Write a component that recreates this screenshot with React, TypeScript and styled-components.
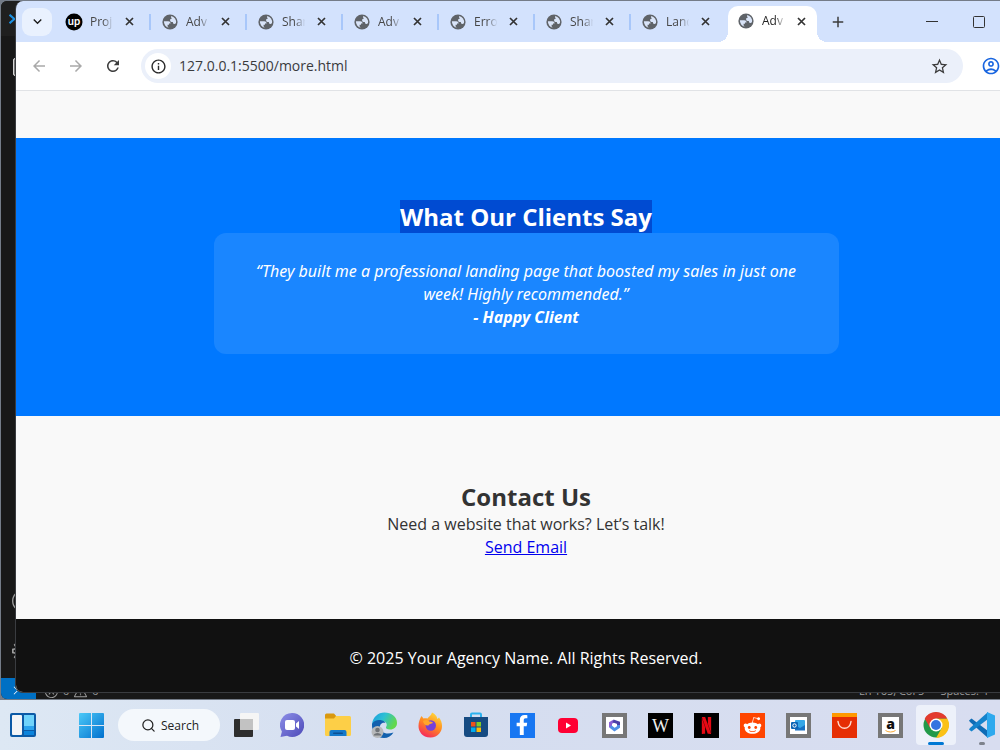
import React from "react";
import styled, { createGlobalStyle, css } from "styled-components";
import {
  MdArrowBack, MdArrowForward, MdRefresh, MdInfoOutline, MdStarBorder,
  MdOutlineAccountCircle, MdAdd, MdKeyboardArrowDown,
} from "react-icons/md";
import { FaRedditAlien, FaFacebookF } from "react-icons/fa";
import { SiNetflix } from "react-icons/si";
import { VscRemote, VscError, VscWarning, VscAccount, VscSettingsGear, VscFiles } from "react-icons/vsc";
import { Search } from "lucide-react";

const Global = createGlobalStyle`
  * { box-sizing: border-box; }
  body { margin: 0; overflow: hidden; font-family: "Open Sans", "Noto Sans", sans-serif; }
  h2, p, blockquote { margin: 0; }
  button { border: 0; padding: 0; background: none; font: inherit; color: inherit; }
  svg { display: block; flex: none; }
`;

const Desktop = styled.div`
  display: flex;
  flex-direction: column;
  min-height: 100vh;
  overflow: hidden;
  background: #747c88;
`;

const Workspace = styled.div`
  display: grid;
  flex: 1;
  grid-template-columns: 1fr;
  padding-top: 1px;
`;

/* editor window behind the browser */
const Editor = styled.div`
  grid-area: 1 / 1;
  display: grid;
  grid-template-rows: 35px 1fr 21px;
  margin: 0 -36px 1px 1px;
  border-radius: 6px;
  overflow: hidden;
  background: #181818;
  color: #9d9d9d;
`;

const EditorTitle = styled.div`
  display: flex;
  align-items: center;
  padding-left: 8px;
  background: #1f1f1f;
`;

const ActivityBar = styled.div`
  display: flex;
  flex-direction: column;
  gap: 28px;
  padding: 16px 11px;
`;

const ActivitySpacer = styled.div`
  flex: 1;
`;

const StatusBar = styled.div`
  display: flex;
  align-items: flex-end;
  gap: 4px;
  padding-right: 36px;
  font-size: 11px;
  line-height: 16px;
`;

const RemoteButton = styled.button`
  display: flex;
  align-items: center;
  padding-left: 10px;
  width: 35px;
  height: 21px;
  margin-right: 4px;
  background: #0070c4;
  color: #fff;
`;

const StatusRight = styled.div`
  display: flex;
  gap: 16px;
  margin-left: auto;
  padding-right: 12px;
  white-space: nowrap;
`;

/* browser window */
const Browser = styled.div`
  grid-area: 1 / 1;
  display: flex;
  flex-direction: column;
  margin: 0 -36px 7px 15px;
  border: 1px solid #3a3c40;
  border-width: 0 0 1px 1px;
  border-radius: 8px;
  overflow: hidden;
  background: #111;
`;

const TabStrip = styled.div`
  display: flex;
  align-items: center;
  height: 41px;
  padding-left: 6px;
  background: #d3e2fd;
  color: #474747;
`;

const TabSearch = styled.button`
  display: grid;
  place-items: center;
  width: 30px;
  height: 28px;
  border-radius: 9px;
  background: #e9f1fe;
  color: #1f1f1f;
`;

const TabList = styled.div`
  display: flex;
  align-self: stretch;
  align-items: center;
  padding-left: 4px;
`;

const Tab = styled.div<{ $active?: boolean; $line?: boolean }>`
  position: relative;
  display: flex;
  align-items: center;
  width: 96px;
  height: 30px;
  padding-left: 10px;
  ${(p) => p.$line && css`
    &::after {
      content: "";
      position: absolute;
      right: 1px;
      width: 2px;
      height: 16px;
      background: #a8c7fa;
    }
  `}
  ${(p) => p.$active && css`
    align-self: flex-end;
    width: 89px;
    height: 36px;
    padding-bottom: 6px;
    border-radius: 10px 10px 0 0;
    background: #fff;
    color: #1f1f1f;
    &::before, &::after {
      content: "";
      position: absolute;
      bottom: 0;
      width: 10px;
      height: 10px;
    }
    &::before { right: 100%; background: radial-gradient(circle at 0 0, transparent 10px, #fff 10px); }
    &::after { left: 100%; background: radial-gradient(circle at 100% 0, transparent 10px, #fff 10px); }
  `}
`;

const TabTitle = styled.span`
  flex: none;
  width: 26px;
  margin: 0 6px 0 8px;
  overflow: hidden;
  white-space: nowrap;
  font-size: 12px;
  line-height: 18px;
  mask-image: linear-gradient(90deg, #000 50%, transparent 90%);
`;

const IconButton = styled.button<{ $faint?: boolean; $size?: number }>`
  display: grid;
  flex: none;
  place-items: center;
  width: ${(p) => p.$size ?? 28}px;
  height: ${(p) => p.$size ?? 28}px;
  color: ${(p) => (p.$faint ? "#a9a9a9" : "#3c3c3c")};
`;

const WindowControls = styled.div`
  display: flex;
  gap: 19px;
  margin-left: auto;
  padding-right: 43px;
`;

const Toolbar = styled.div`
  display: flex;
  align-items: center;
  height: 49px;
  gap: 9px;
  padding: 0 31px 0 9px;
  border-bottom: 1px solid #e1e3e6;
  background: #fff;
`;

const AddressBar = styled.div`
  display: flex;
  flex: 1;
  align-items: center;
  height: 34px;
  margin: 0 5px;
  padding: 0 10px 0 4px;
  border-radius: 17px;
  background: #ebf0fa;
`;

const SiteInfo = styled.button`
  display: grid;
  place-items: center;
  width: 26px;
  height: 26px;
  border-radius: 50%;
  background: #fff;
  color: #2a2a2a;
`;

const AddressInput = styled.input`
  flex: 1;
  min-width: 0;
  border: 0;
  padding: 0 8px;
  outline: 0;
  background: none;
  color: #3a3b3e;
  font: 14px/20px "Open Sans", sans-serif;
`;

const Profile = styled(IconButton)`
  color: #1a66e0;
`;

const Page = styled.main`
  display: flex;
  flex: 1;
  flex-direction: column;
  padding-top: 47px;
  background: #f9f9f9;
  color: #333;
  text-align: center;
  font-size: 16px;
  line-height: 23px;
`;

const Section = styled.section<{ $blue?: boolean }>`
  padding: 64px 24px 60px;
  ${(p) => p.$blue && css`
    padding: 62px 24px;
    background: #0078ff;
    color: #fff;
  `}
`;

const Heading = styled.h2`
  font-size: 24px;
  line-height: 33px;
  font-weight: 700;
`;

const Selected = styled.span`
  display: inline-block;
  background: #004bd2;
`;

const Testimonial = styled.blockquote`
  max-width: 625px;
  margin: 0 auto;
  padding: 27px 31px 25px;
  border-radius: 12px;
  background: #1a86ff;
  font-family: "Noto Sans", "Open Sans", sans-serif;
  font-style: italic;
`;

const MailLink = styled.a`
  color: #0000ee;
  text-decoration: underline;
`;

const Footer = styled.footer`
  flex: 1;
  padding: 28px 24px 22px;
  background: #111;
  color: #fff;
`;

/* taskbar */
const Taskbar = styled.nav`
  display: flex;
  align-items: center;
  height: 50px;
  background: linear-gradient(90deg, #dde8f4, #d5def0 40%, #d8ddf0);
`;

const TaskButton = styled.button<{ $open?: "active" | "idle" }>`
  position: relative;
  display: grid;
  flex: none;
  place-items: center;
  width: 46px;
  height: 50px;
  ${(p) => p.$open === "active" && css`
    &::before {
      content: "";
      position: absolute;
      inset: 5px 3px;
      border-radius: 4px;
      background: #edf1fa;
    }
  `}
  svg { position: relative; }
  ${(p) => p.$open && css`
    &::after {
      content: "";
      position: absolute;
      bottom: 5px;
      width: ${p.$open === "active" ? 16 : 6}px;
      height: 3px;
      border-radius: 2px;
      background: ${p.$open === "active" ? "#0078d4" : "#7d828c"};
    }
  `}
`;

const StartGroup = styled.div`
  display: flex;
  flex: none;
  gap: 22px;
  padding-right: 4px;
`;

const TaskSearch = styled.button`
  display: flex;
  flex: none;
  align-items: center;
  gap: 5px;
  width: 102px;
  height: 32px;
  margin-right: 3px;
  padding-left: 23px;
  border-radius: 16px;
  background: #f4f8fc;
  color: #222;
  font-size: 12px;
`;

const Tile = styled.span<{ $bg: string; $fg?: string; $framed?: boolean }>`
  display: grid;
  place-items: center;
  width: 25px;
  height: 25px;
  background: ${(p) => p.$bg};
  color: ${(p) => p.$fg ?? "#fff"};
  ${(p) => p.$framed && css`border: 4px solid #777;`}
`;

const CloseIcon = () => (
  <svg width="9" height="9" viewBox="0 0 9 9" aria-hidden="true">
    <path d="M1 1l7 7M8 1l-7 7" stroke="#333" strokeWidth="1.700" />
  </svg>
);

const Globe = () => (
  <svg width="16" height="16" viewBox="0 0 16 16" aria-hidden="true">
    <circle cx="8" cy="8" r="7.600" fill="#5f6368" />
    <path d="M1.900 7.200h4.300c1.800 0 2.400 1 2.400 2.300H7v1.200H5.600v1.500c0 .6.500 1 1.300 1.500A6.200 6.200 0 0 1 1.900 7.200z" fill="#d9e4f8" />
    <path d="M9.300 2.100A6.100 6.100 0 0 1 14 9c-.6.900-1.400 1.200-2.100.9-.8-.3-1-1-1-1.900-1.600.1-2.700-.4-2.800-1.600-.1-1.200.8-1.700 1.900-1.800-.9-.5-1.200-1.500-.7-2.500z" fill="#d9e4f8" />
  </svg>
);

const UpLogo = () => (
  <svg width="16" height="18" viewBox="1 0 16 18" overflow="visible" aria-hidden="true">
    <circle cx="9" cy="9" r="8.500" fill="#000" />
    <text x="9" y="12" textAnchor="middle" fontFamily="Lato" fontSize="11" fontWeight="700" fill="#fff">up</text>
  </svg>
);

const WidgetsIcon = () => (
  <svg width="26" height="24" viewBox="0 0 26 24">
    <rect width="26" height="24" rx="2" fill="#0c5aa6" />
    <rect x="2" y="2" width="10" height="20" rx="1" fill="#f3f5f7" />
    <rect x="14" y="2" width="10" height="11" fill="#6fd3fb" />
    <rect x="14" y="13" width="10" height="4" fill="#2aa3ee" />
    <rect x="14" y="18" width="10" height="4" fill="#0c84dc" />
  </svg>
);

const WindowsIcon = () => (
  <svg width="25" height="25" viewBox="0 0 25 25">
    <defs>
      <linearGradient id="win" x1="0" y1="0" x2="1" y2="1">
        <stop offset="0" stopColor="#4cc9f8" /><stop offset="1" stopColor="#0070ce" />
      </linearGradient>
    </defs>
    <path fill="url(#win)" d="M1 0h11v12H0V1a1 1 0 0 1 1-1zm12 0h11a1 1 0 0 1 1 1v11H13zM0 13h12v12H1a1 1 0 0 1-1-1zm13 0h12v11a1 1 0 0 1-1 1H13z" />
  </svg>
);

const TaskViewIcon = () => (
  <svg width="26" height="24" viewBox="0 0 26 24">
    <rect x="1" y="6" width="19" height="18" rx="1" fill="#2e2e2e" />
    <rect x="7" y="0" width="19" height="17" rx="1" fill="#f5f5f5" />
    <path d="M7 6h13v11H7z" fill="#c2c2c2" />
  </svg>
);

const ChatIcon = () => (
  <svg width="24" height="24" viewBox="0 0 24 24">
    <defs>
      <linearGradient id="chat" x1="0" y1="0" x2="1" y2="1">
        <stop offset="0" stopColor="#8d8fe8" /><stop offset="1" stopColor="#4d4ab8" />
      </linearGradient>
    </defs>
    <path d="M12 0a12 12 0 1 1-5 22.800L.5 24l1.400-5.500A12 12 0 0 1 12 0z" fill="url(#chat)" />
    <rect x="5" y="7" width="10" height="10" rx="2" fill="#fff" />
    <path d="M16 10.500l3-2.500v8l-3-2.500z" fill="#fff" />
  </svg>
);

const FolderIcon = () => (
  <svg width="26" height="24" viewBox="0 0 26 24">
    <path d="M0 2a1.500 1.500 0 0 1 1.500-1.500H9L12 4h-1v4H0z" fill="#d9980f" />
    <path d="M0 5.500h9L11 3h13.500A1.500 1.500 0 0 1 26 4.500v17a1.500 1.500 0 0 1-1.500 1.500h-23A1.500 1.500 0 0 1 0 21.500z" fill="#fdcf47" />
    <path d="M4.500 23v-4a2 2 0 0 1 2-2h13a2 2 0 0 1 2 2v4z" fill="#1479cb" />
    <rect x="8" y="19.500" width="10" height="1.500" rx=".7" fill="#0a4f93" />
  </svg>
);

const EdgeIcon = () => (
  <svg width="26" height="26" viewBox="0 0 26 26">
    <defs>
      <linearGradient id="edge" x1="0" y1="0" x2="1" y2=".4">
        <stop offset="0" stopColor="#1c9be0" /><stop offset=".5" stopColor="#2cc0d4" /><stop offset="1" stopColor="#62d84e" />
      </linearGradient>
    </defs>
    <path d="M1 12C2 5 7 .5 13.500.5 20.500.5 26 5 26 11c0 4-3 6.500-7 6.500-3 0-4.500-1-4-2.500 1.800-2 .5-6-4-6C6 9 2 11 1 16z" fill="url(#edge)" />
    <path d="M1 12c1.500-3 5-4.500 8.500-4 2.500.3 4.500 1.500 5 3-4-1-6 2-5.500 5 .8 4.500 6 7 13.500 4.500-2 3.500-5.500 5.500-9.500 5.500C6 26 .5 20 1 12z" fill="#1260ae" />
    <circle cx="6.500" cy="20" r="6" fill="#b7b9bb" />
    <circle cx="6.500" cy="18" r="2.300" fill="#6f7377" />
    <path d="M2.500 23.500c.5-3.500 7.500-3.500 8 0z" fill="#6f7377" />
  </svg>
);

const FirefoxIcon = () => (
  <svg width="25" height="26" viewBox="0 0 25 26">
    <defs>
      <linearGradient id="fox" x1=".8" y1="0" x2=".3" y2="1">
        <stop offset="0" stopColor="#ffe03c" /><stop offset=".5" stopColor="#ff8a20" /><stop offset="1" stopColor="#f5275e" />
      </linearGradient>
    </defs>
    <path d="M3.500 4l2 2.500c1.500-.5 2.500-.5 4 0C11 4.500 13.500 3 14 .5 18 2.500 19 5 19.500 7L21 5.500C27 13 24 25 12.500 25.500 4 25.500.5 19 .5 14 .5 10 2 6.500 3.500 4z" fill="url(#fox)" />
    <circle cx="12.800" cy="13.500" r="5.200" fill="#7540d8" />
    <path d="M5 9c3-2 5-1 6.500.5 2 0 3 .5 3.500 1.500-2 1-4 1-4.500 2.500-3 .5-5-1.500-5.500-4.500z" fill="#ffa62b" />
  </svg>
);

const StoreIcon = () => (
  <svg width="26" height="26" viewBox="0 0 26 26">
    <path d="M8 6V2.500a1 1 0 0 1 1-1h8a1 1 0 0 1 1 1V6" fill="none" stroke="#2bb1ee" strokeWidth="2" />
    <path d="M1 5h24v17a3 3 0 0 1-3 3H4a3 3 0 0 1-3-3z" fill="#164b82" />
    <path d="M8 10h4.500v4.500H8z" fill="#f1511b" /><path d="M13.500 10H18v4.500h-4.500z" fill="#80cc28" />
    <path d="M8 15.500h4.500V20H8z" fill="#00adef" /><path d="M13.500 15.500H18V20h-4.500z" fill="#fbbc09" />
  </svg>
);

const YoutubeIcon = () => (
  <svg width="20" height="15" viewBox="0 0 20 15">
    <rect width="20" height="15" rx="4" fill="#ff0033" />
    <path d="M8 4.500l5 3-5 3z" fill="#fff" />
  </svg>
);

const OfficeIcon = () => (
  <svg width="13" height="13" viewBox="0 0 13 13" fill="none" strokeWidth="3">
    <path d="M5.500 2.200L2.500 4v4.500" stroke="#8a5fd6" />
    <path d="M5 1.800l5.500 2V7" stroke="#4a3fa8" />
    <path d="M2.500 7.500l4 3.200 4-2.700V6" stroke="#4f8fe6" />
  </svg>
);

const OutlookIcon = () => (
  <svg width="14" height="13" viewBox="0 0 14 13">
    <rect x="4" y="1" width="10" height="10" rx="1" fill="#35a7e8" />
    <path d="M4 6l5 3 5-3v5.500H4z" fill="#1671c4" />
    <rect x="0" y="3" width="7" height="7" rx="1" fill="#0a64b5" />
    <circle cx="3.500" cy="6.500" r="1.700" fill="none" stroke="#fff" />
  </svg>
);

const AliIcon = () => (
  <svg width="25" height="25" viewBox="0 0 25 25">
    <path d="M0 0h25v25H0z" fill="#e62e04" />
    <path d="M0 0h25v4H0z" fill="#ff9900" />
    <path d="M6 8.500c1 9 12 9 13 0" fill="none" stroke="#ffd9cc" strokeWidth="1.500" strokeLinecap="round" />
  </svg>
);

const WikiIcon = () => (
  <svg width="25" height="25" viewBox="0 0 25 25">
    <path d="M0 0h25v25H0z" fill="#000" />
    <text x="12.500" y="19" textAnchor="middle" fontFamily="Liberation Serif" fontSize="18" fill="#eee">W</text>
  </svg>
);

const AmazonIcon = () => (
  <svg width="17" height="17" viewBox="0 0 17 17">
    <text x="8.500" y="12" textAnchor="middle" fontFamily="Open Sans" fontSize="14" fontWeight="800" fill="#111">a</text>
    <path d="M3.500 13.500c3 2 7 2 10 0" fill="none" stroke="#f7a938" />
  </svg>
);

const ChromeIcon = () => (
  <svg width="26" height="26" viewBox="0 0 26 26">
    <circle cx="13" cy="13" r="12.500" fill="#229a49" />
    <path d="M13 6.500h11.260A13 13 0 0 1 13 26l5.630-9.750z" fill="#fbc116" />
    <path d="M7.370 16.250L1.740 6.500A13 13 0 0 1 24.260 6.500H13z" fill="#e33b2e" />
    <circle cx="13" cy="13" r="6.500" fill="#fff" />
    <circle cx="13" cy="13" r="5" fill="#3474e0" />
  </svg>
);

const CodeIcon = () => (
  <svg width="26" height="26" viewBox="0 0 26 26">
    <path d="M0 8.500l2.500-2L19 19v7L1 10z" fill="#0f6cb5" />
    <path d="M0 17.500l2.500 2L19 7V0L1 16z" fill="#1583cc" />
    <path d="M18 0l8 3.500v19L18 26z" fill="#2ea9ee" />
  </svg>
);

const tabs = [
  { title: "Proj", up: true },
  { title: "Adv" }, { title: "Shar" }, { title: "Adv" },
  { title: "Erro" }, { title: "Shar" }, { title: "Land" }, { title: "Adv" },
];

const apps: { name: string; icon: React.ReactNode; open?: "active" | "idle" }[] = [
  { name: "Task view", icon: <TaskViewIcon /> },
  { name: "Chat", icon: <ChatIcon /> },
  { name: "File Explorer", icon: <FolderIcon /> },
  { name: "Edge", icon: <EdgeIcon /> },
  { name: "Firefox", icon: <FirefoxIcon /> },
  { name: "Store", icon: <StoreIcon /> },
  { name: "Facebook", icon: <Tile $bg="#1877f2"><FaFacebookF size={20} /></Tile> },
  { name: "YouTube", icon: <YoutubeIcon /> },
  { name: "Microsoft 365", icon: <Tile $bg="#fff" $framed><OfficeIcon /></Tile> },
  { name: "Wikipedia", icon: <WikiIcon /> },
  { name: "Netflix", icon: <Tile $bg="#000" $fg="#e50914"><SiNetflix size={17} /></Tile> },
  { name: "Reddit", icon: <Tile $bg="#ff4500"><FaRedditAlien size={19} /></Tile> },
  { name: "Outlook", icon: <Tile $bg="#fff" $framed><OutlookIcon /></Tile> },
  { name: "AliExpress", icon: <AliIcon /> },
  { name: "Amazon", icon: <Tile $bg="#fff" $framed><AmazonIcon /></Tile> },
  { name: "Chrome", icon: <ChromeIcon />, open: "active" },
  { name: "Visual Studio Code", icon: <CodeIcon />, open: "idle" },
];

export default function App() {
  return (
    <Desktop>
      <Global />
      <Workspace>
        <Editor>
          <EditorTitle>
            <svg width="14" height="14" viewBox="0 0 26 26"><path d="M1 5l9 8-9 8" fill="none" stroke="#1b8fe0" strokeWidth="4" /></svg>
          </EditorTitle>
          <ActivityBar>
            <VscFiles size={24} color="#d7d7d7" />
            <ActivitySpacer />
            <VscAccount size={22} />
            <VscSettingsGear size={22} />
          </ActivityBar>
          <StatusBar>
            <RemoteButton aria-label="Remote"><VscRemote size={14} /></RemoteButton>
            <VscError size={15} /> 0 <VscWarning size={15} /> 0
            <StatusRight><span>Ln 165, Col 5</span><span>Spaces: 4</span></StatusRight>
          </StatusBar>
        </Editor>
        <Browser>
          <TabStrip>
            <TabSearch aria-label="Search tabs"><MdKeyboardArrowDown size={17} /></TabSearch>
            <TabList>
              {tabs.map((t, i) => (
                <Tab key={i} $active={i === 7} $line={i < 6}>
                  {t.up ? <UpLogo /> : <Globe />}
                  <TabTitle>{t.title}</TabTitle>
                  <IconButton $size={15} aria-label="Close tab"><CloseIcon /></IconButton>
                </Tab>
              ))}
            </TabList>
            <IconButton aria-label="New tab" $size={42}><MdAdd size={18} /></IconButton>
            <WindowControls>
              <IconButton aria-label="Minimize">
                <svg width="12" height="12"><path d="M0 5.500h12" stroke="#333" /></svg>
              </IconButton>
              <IconButton aria-label="Maximize">
                <svg width="12" height="12"><rect x=".5" y=".5" width="11" height="11" rx="1" fill="none" stroke="#333" /></svg>
              </IconButton>
            </WindowControls>
          </TabStrip>
          <Toolbar>
            <IconButton $faint aria-label="Back"><MdArrowBack size={18} /></IconButton>
            <IconButton $faint aria-label="Forward"><MdArrowForward size={18} /></IconButton>
            <IconButton aria-label="Reload"><MdRefresh size={18} /></IconButton>
            <AddressBar>
              <SiteInfo aria-label="Site information"><MdInfoOutline size={17} /></SiteInfo>
              <AddressInput aria-label="Address" defaultValue="127.0.0.1:5500/more.html" />
              <IconButton aria-label="Bookmark"><MdStarBorder size={19} /></IconButton>
            </AddressBar>
            <Profile aria-label="Profile"><MdOutlineAccountCircle size={20} /></Profile>
          </Toolbar>
          <Page>
            <Section $blue>
              <Heading><Selected>What Our Clients Say</Selected></Heading>
              <Testimonial>
                <p>“They built me a professional landing page that boosted my sales in just one week! Highly recommended.”</p>
                <strong>- Happy Client</strong>
              </Testimonial>
            </Section>
            <Section>
              <Heading>Contact Us</Heading>
              <p>Need a website that works? Let’s talk!</p>
              <MailLink href="mailto:hello@example.com">Send Email</MailLink>
            </Section>
            <Footer><p>© 2025 Your Agency Name. All Rights Reserved.</p></Footer>
          </Page>
        </Browser>
      </Workspace>
      <Taskbar>
        <StartGroup>
          <TaskButton aria-label="Widgets"><WidgetsIcon /></TaskButton>
          <TaskButton aria-label="Start"><WindowsIcon /></TaskButton>
        </StartGroup>
        <TaskSearch><Search size={15} /> Search</TaskSearch>
        {apps.map((a) => (
          <TaskButton key={a.name} aria-label={a.name} $open={a.open}>{a.icon}</TaskButton>
        ))}
      </Taskbar>
    </Desktop>
  );
}
